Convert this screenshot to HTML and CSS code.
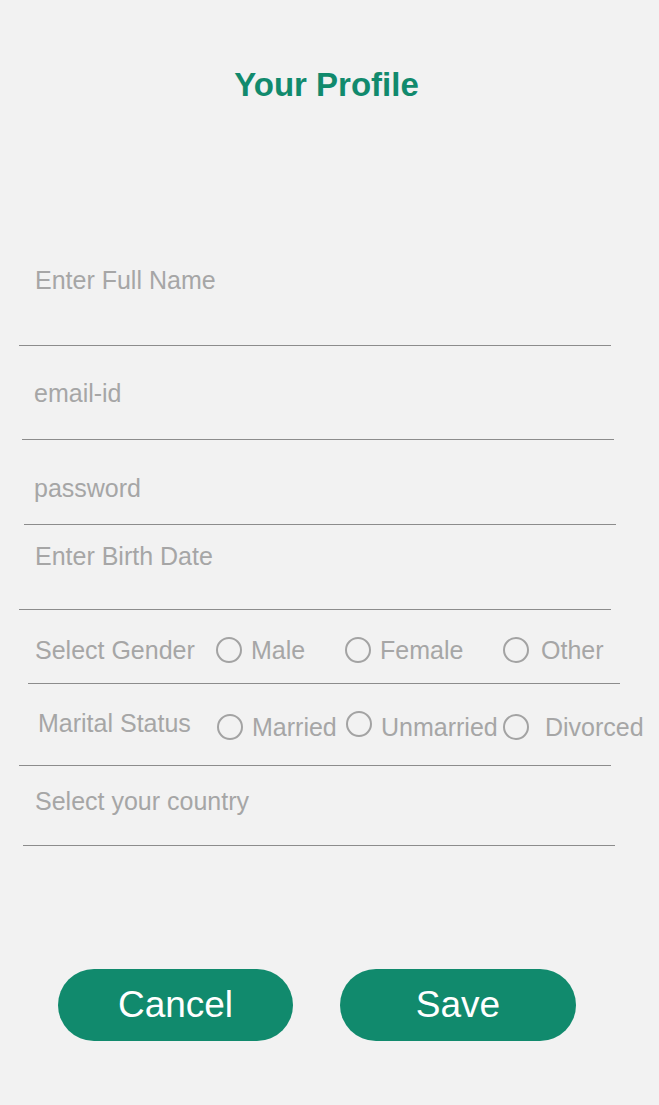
FILE: index.html
```html
<!DOCTYPE html>
<html lang="en">
<head>
<meta charset="utf-8">
<title>Your Profile</title>
<link rel="stylesheet" href="styles.css">
</head>
<body>
<main class="page">
  <h1 class="title">Your Profile</h1>
  <form class="form">
    <div class="field field-name"><span class="ph">Enter Full Name</span></div>
    <div class="field field-email"><span class="ph">email-id</span></div>
    <div class="field field-pass"><span class="ph">password</span></div>
    <div class="field field-birth"><span class="ph">Enter Birth Date</span></div>
    <div class="field field-gender">
      <span class="ph label label-gender">Select Gender</span>
      <span class="opt opt-a"><span class="radio"></span><span class="ph">Male</span></span>
      <span class="opt opt-b"><span class="radio"></span><span class="ph">Female</span></span>
      <span class="opt opt-c"><span class="radio"></span><span class="ph">Other</span></span>
    </div>
    <div class="field field-marital">
      <span class="ph label label-marital">Marital Status</span>
      <span class="opt opt-a"><span class="radio"></span><span class="ph">Married</span></span>
      <span class="opt opt-b opt-up"><span class="radio"></span><span class="ph">Unmarried</span></span>
      <span class="opt opt-c opt-wide"><span class="radio"></span><span class="ph">Divorced</span></span>
    </div>
    <div class="field field-country"><span class="ph">Select your country</span></div>
  </form>
  <div class="actions">
    <button type="button" class="btn btn-cancel">Cancel</button>
    <button type="button" class="btn btn-save">Save</button>
  </div>
</main>
</body>
</html>
```

FILE: styles.css
```css
* { box-sizing: border-box; }
html, body { margin: 0; padding: 0; background: #f2f2f2; }
body {
  font-family: "Liberation Sans", Arial, sans-serif;
  width: 653px;
}
.page { padding-top: 65px; }
.title {
  margin: 0;
  text-align: center;
  font-size: 33px;
  line-height: 40px;
  font-weight: bold;
  color: #118a6d;
}
.form { margin-top: 160px; display: flex; flex-direction: column; }
.field {
  width: 592px;
  border-bottom: 1px solid #8c8c8c;
  display: flex;
  align-items: center;
}
.ph {
  font-size: 25px;
  line-height: 30px;
  color: #a6a6a6;
  white-space: nowrap;
}
.field-name { margin-left: 19px; padding: 0 0 50px 16px; }
.field-email { margin-left: 22px; padding: 32px 0 31px 12px; }
.field-pass { margin-left: 24px; padding: 33px 0 21px 10px; }
.field-birth { margin-left: 19px; padding: 16px 0 38px 16px; }
.field-gender { margin-left: 28px; padding: 25px 0 18px 7px; }
.field-marital { margin-left: 19px; padding: 26px 0 25px 19px; }
.field-country { margin-left: 23px; padding: 20px 0 29px 12px; }

.label { flex: none; }
.label-gender { width: 181px; }
.label-marital { width: 179px; position: relative; top: -2px; }
.opt { display: flex; align-items: center; gap: 9px; flex: none; }
.opt-a { width: 129px; }
.opt-b { width: 157px; }
.field-gender .opt-b { width: 158px; }
.field-gender .opt-c { gap: 12px; }
.opt-up .radio { position: relative; top: -3px; }
.opt-wide { gap: 16px; }
.field-marital .opt { position: relative; top: 2px; }
.radio {
  width: 26px;
  height: 26px;
  border: 2px solid #a3a3a3;
  border-radius: 50%;
  flex: none;
}
.actions {
  margin-top: 123px;
  display: flex;
  padding-left: 58px;
  gap: 47px;
}
.btn {
  height: 72px;
  border: none;
  border-radius: 36px;
  background: #118a6d;
  color: #ffffff;
  font-family: "Liberation Sans", Arial, sans-serif;
  font-size: 37px;
  padding: 0;
}
.btn-cancel { width: 235px; }
.btn-save { width: 236px; }
```
